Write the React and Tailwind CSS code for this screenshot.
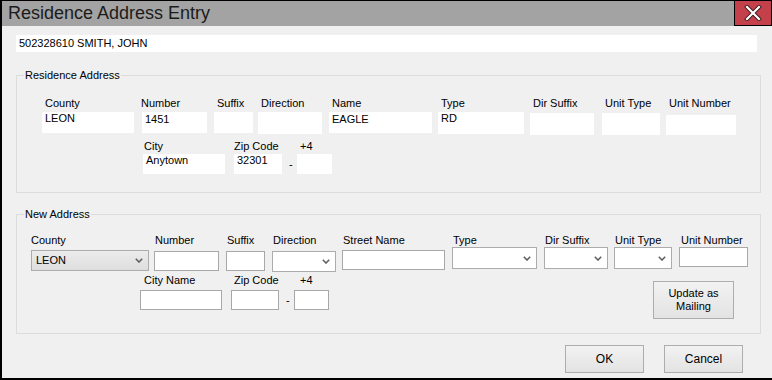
import React from 'react'

const font = "font-['Liberation_Sans',Arial,sans-serif]"

function Field({ label, className = '', labelClass = '', children }) {
  return (
    <div className={`flex flex-col shrink-0 ${className}`}>
      <div className={`h-[13px] leading-[13px] whitespace-nowrap ${labelClass}`}>{label}</div>
      {children}
    </div>
  )
}

// read-only box in the residence section (no border)
function ReadBox({ value, className = '' }) {
  return <div className={`bg-white pl-[3px] leading-[13px] whitespace-nowrap ${className}`}>{value}</div>
}

function TextBox({ className = '' }) {
  return <div className={`bg-white border border-[#a8a8a8] h-[20px] ${className}`} />
}

function Chevron() {
  return (
    <svg width="8" height="5" viewBox="0 0 8 5" className="shrink-0">
      <path d="M0.8 0.8 L4 4 L7.2 0.8" stroke="#606060" strokeWidth="1.6" fill="none" />
    </svg>
  )
}

function Combo({ value = '', gray = false, className = '' }) {
  return (
    <div
      className={`flex items-center justify-between border border-[#acacac] pl-[4px] pr-[5px] ${
        gray ? 'bg-linear-to-b from-[#ececec] to-[#dedede]' : 'bg-white'
      } ${className}`}
    >
      <span className="leading-[13px]">{value}</span>
      <Chevron />
    </div>
  )
}

function Dash({ className = '' }) {
  return (
    <div className={`flex flex-col shrink-0 w-[15px] ${className}`}>
      <div className="h-[13px]" />
      <div className="h-[20px] leading-[20px] mt-[var(--dm)]">-</div>
    </div>
  )
}

function WinButton({ children, className = '' }) {
  return (
    <div
      className={`flex items-center justify-center text-center border border-[#adadad] bg-linear-to-b from-[#f2f2f2] to-[#e3e3e3] leading-[13px] ${className}`}
    >
      {children}
    </div>
  )
}

export default function App() {
  return (
    <div
      className={`w-[772px] h-[380px] bg-[#f0f0f0] border-t border-l-2 border-b-2 border-black flex flex-col text-[11px] text-black ${font}`}
    >
      {/* title bar */}
      <div className="flex h-[25px] shrink-0 bg-[#a3a3a3]">
        <div className="flex-1 pl-[6px] text-[18px] leading-[25px] text-[#1b1b1b]">Residence Address Entry</div>
        <div className="w-[38px] h-[25px] bg-[#c4414c] border-l border-r border-b border-black flex items-center justify-center">
          <svg width="18" height="16" viewBox="0 0 18 16">
            <path d="M3 2 L15 14 M15 2 L3 14" stroke="#3a1a1c" strokeWidth="4" strokeLinecap="square" />
            <path d="M3 2 L15 14 M15 2 L3 14" stroke="#ffffff" strokeWidth="2.2" strokeLinecap="square" />
          </svg>
        </div>
      </div>

      {/* voter line */}
      <div className="ml-[14px] mt-[9px] w-[741px] h-[17px] bg-white pl-[3px] leading-[17px]">502328610 SMITH, JOHN</div>

      {/* Residence Address */}
      <fieldset className="ml-[14px] mt-[17px] w-[745px] border border-[#dcdcdc] pb-[18px]">
        <legend className="ml-[7px] px-[1px] leading-[13px]">Residence Address</legend>
        <div className="flex items-start h-[40px] mt-[15px]">
          <Field label="County" className="ml-[25px] w-[92px]" labelClass="pl-[3px]">
            <ReadBox value="LEON" className="mt-[2px] h-[21px]" />
          </Field>
          <Field label="Number" className="ml-[8px] w-[65px]" labelClass="-ml-[1px]">
            <ReadBox value="1451" className="mt-[2px] h-[21px] pt-[1px]" />
          </Field>
          <Field label="Suffix" className="ml-[7px] w-[39px]" labelClass="pl-[3px]">
            <ReadBox className="mt-[2px] h-[21px]" />
          </Field>
          <Field label="Direction" className="ml-[5px] w-[64px]" labelClass="pl-[3px]">
            <ReadBox className="mt-[2px] h-[22px]" />
          </Field>
          <Field label="Name" className="ml-[7px] w-[103px]" labelClass="pl-[3px]">
            <ReadBox value="EAGLE" className="mt-[2px] h-[21px] pt-[1px]" />
          </Field>
          <Field label="Type" className="ml-[6px] w-[86px]" labelClass="pl-[3px]">
            <ReadBox value="RD" className="mt-[2px] h-[22px]" />
          </Field>
          <Field label="Dir Suffix" className="ml-[6px] w-[64px]" labelClass="pl-[3px]">
            <ReadBox className="mt-[3px] h-[22px]" />
          </Field>
          <Field label="Unit Type" className="ml-[8px] w-[58px]" labelClass="pl-[3px]">
            <ReadBox className="mt-[3px] h-[22px]" />
          </Field>
          <Field label="Unit Number" className="ml-[6px] w-[70px]" labelClass="pl-[3px]">
            <ReadBox className="mt-[5px] h-[20px]" />
          </Field>
        </div>
        <div className="flex items-start mt-[3px]">
          <Field label="City" className="ml-[126px] w-[82px]" labelClass="pl-[1px]">
            <ReadBox value="Anytown" className="mt-[1px] h-[20px]" />
          </Field>
          <Field label="Zip Code" className="ml-[9px] w-[48px]">
            <ReadBox value="32301" className="mt-[1px] h-[20px]" />
          </Field>
          <div className="flex flex-col shrink-0 w-[15px] pl-[7px]">
            <div className="h-[13px]" />
            <div className="mt-[1px] h-[20px] leading-[20px]">-</div>
          </div>
          <Field label="+4" className="w-[35px]" labelClass="pl-[3px]">
            <ReadBox className="mt-[1px] h-[20px]" />
          </Field>
        </div>
      </fieldset>

      {/* New Address */}
      <fieldset className="ml-[14px] mt-[15px] w-[745px] border border-[#dcdcdc] pb-[14px]">
        <legend className="ml-[7px] px-[1px] leading-[13px]">New Address</legend>
        <div className="flex items-start h-[40px] mt-[13px]">
          <Field label="County" className="ml-[14px] w-[118px]">
            <Combo value="LEON" gray className="mt-[3px] h-[21px]" />
          </Field>
          <Field label="Number" className="ml-[5px] w-[65px]" labelClass="pl-[1px]">
            <TextBox className="mt-[4px]" />
          </Field>
          <Field label="Suffix" className="ml-[7px] w-[39px]" labelClass="pl-[1px]">
            <TextBox className="mt-[4px]" />
          </Field>
          <Field label="Direction" className="ml-[7px] w-[64px]" labelClass="pl-[1px]">
            <Combo className="mt-[4px] h-[21px]" />
          </Field>
          <Field label="Street Name" className="ml-[6px] w-[103px]" labelClass="pl-[1px]">
            <TextBox className="mt-[3px]" />
          </Field>
          <Field label="Type" className="ml-[7px] w-[85px]" labelClass="pl-[1px]">
            <Combo className="h-[22px]" />
          </Field>
          <Field label="Dir Suffix" className="ml-[7px] w-[64px]" labelClass="pl-[1px]">
            <Combo className="h-[22px]" />
          </Field>
          <Field label="Unit Type" className="ml-[6px] w-[58px]" labelClass="pl-[1px]">
            <Combo className="h-[22px]" />
          </Field>
          <Field label="Unit Number" className="ml-[7px] w-[69px]" labelClass="pl-[2px]">
            <TextBox />
          </Field>
        </div>
        <div className="flex items-start">
          <Field label="City Name" className="ml-[123px] w-[82px]" labelClass="pl-[4px]">
            <TextBox className="mt-[3px]" />
          </Field>
          <Field label="Zip Code" className="ml-[9px] w-[48px]" labelClass="pl-[3px]">
            <TextBox className="mt-[3px]" />
          </Field>
          <div className="flex flex-col shrink-0 w-[15px] pl-[7px]">
            <div className="h-[13px]" />
            <div className="mt-[3px] h-[20px] leading-[20px]">-</div>
          </div>
          <Field label="+4" className="w-[35px]" labelClass="pl-[6px]">
            <TextBox className="mt-[3px]" />
          </Field>
          <WinButton className="ml-[324px] mt-[7px] w-[81px] h-[38px]">
            Update as
            <br />
            Mailing
          </WinButton>
        </div>
      </fieldset>

      {/* dialog buttons */}
      <div className="flex mt-[11px]">
        <WinButton className="ml-[563px] w-[79px] h-[28px] text-[12px]">OK</WinButton>
        <WinButton className="ml-[20px] w-[79px] h-[28px] text-[12px]">Cancel</WinButton>
      </div>
    </div>
  )
}
